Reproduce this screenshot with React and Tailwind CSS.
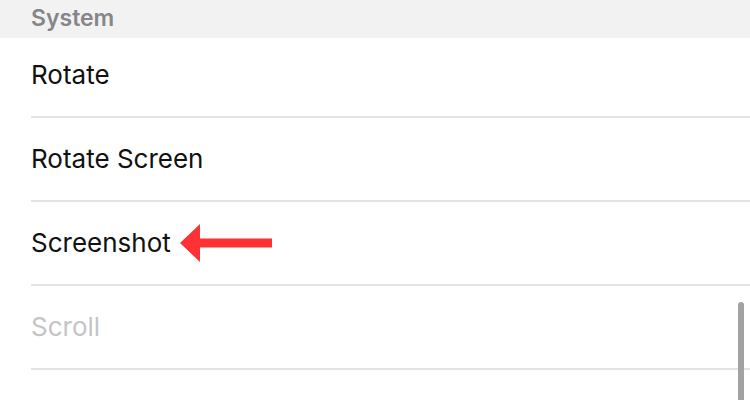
import { Fragment } from 'react'

const rows = [
  { label: 'Rotate', first: true },
  { label: 'Rotate Screen' },
  { label: 'Screenshot', arrow: true },
  { label: 'Scroll', disabled: true },
]

function RedArrow() {
  return (
    <svg width="92" height="38" viewBox="0 0 92 38" className="shrink-0">
      <polygon
        points="0,19 20,0 20,14.5 92,14.5 92,23.5 20,23.5 20,38"
        fill="#fe3234"
      />
    </svg>
  )
}

export default function App() {
  return (
    <div
      className="relative w-[750px] h-[400px] overflow-hidden bg-white"
      style={{ fontFamily: 'Inter, "Noto Sans", sans-serif' }}
    >
      {/* Section header */}
      <div className="h-[38px] bg-[#f2f2f2] pl-[31px] flex items-start">
        <span className="text-[23px] font-semibold text-[#86868a] leading-none pt-[7px]">
          System
        </span>
      </div>

      {/* Rows */}
      <div className="pl-[31px]">
        {rows.map((row) => (
          <Fragment key={row.label}>
            <div
              className={`flex items-center gap-[9px] ${
                row.first ? 'h-[78px] pb-[4px]' : 'h-[82px]'
              }`}
            >
              <span
                className={`text-[26px] leading-none ${
                  row.disabled ? 'text-[#c4c4c6]' : 'text-[#111111]'
                }`}
              >
                {row.label}
              </span>
              {row.arrow && <RedArrow />}
            </div>
            <div className="h-[2px] bg-[#e4e4e6]" />
          </Fragment>
        ))}
        <div className="h-[40px]" />
      </div>

      {/* Scroll indicator */}
      <div className="absolute left-[738px] top-[302px] w-[6px] h-[110px] rounded-full bg-[#a2a2a2]" />
    </div>
  )
}
